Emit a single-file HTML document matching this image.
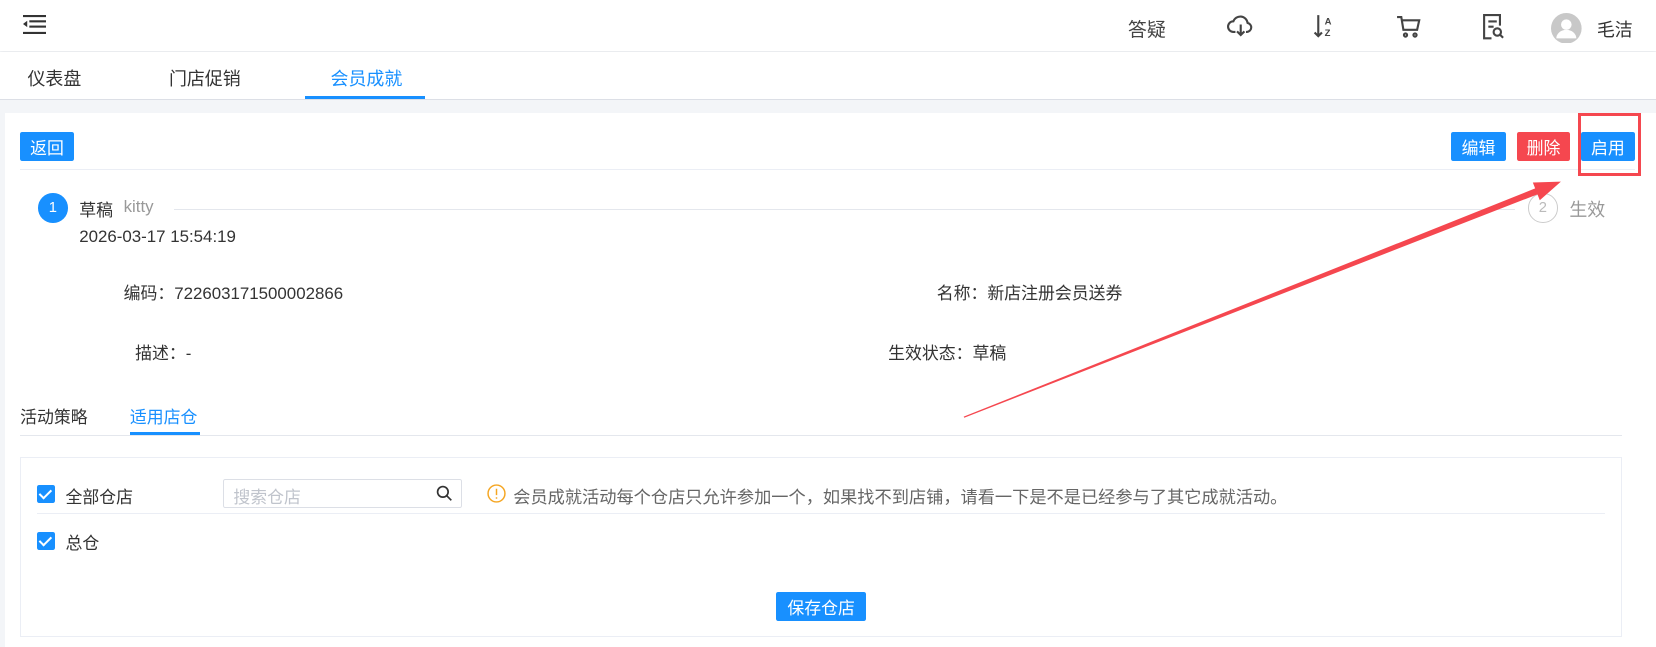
<!DOCTYPE html>
<html><head><meta charset="utf-8"><style>
html{zoom:1.0561}
body{margin:0;width:1568px;height:613px;overflow:hidden;background:#f3f5f8;font-family:"Liberation Sans","Noto Sans CJK SC",sans-serif;font-size:16px;color:#333;position:relative}
.a{position:absolute;white-space:nowrap}
.top{left:0;top:0;width:1568px;height:48px;background:#fff;box-shadow:0 1px 3px rgba(0,0,0,.06)}
.tabs{left:0;top:49px;width:1568px;height:45px;background:#fff;border-bottom:1px solid #dcdfe6}
.card{left:5px;top:107px;width:1563px;height:506px;background:#fff}
.btn{position:absolute;height:27px;display:flex;align-items:center;justify-content:center;color:#fff;font-size:16px;border-radius:2px;background:#1890ff}
.cb{position:absolute;width:17px;height:17px;background:#1890ff;border-radius:2px}
.cb:after{content:"";position:absolute;left:5px;top:2px;width:5px;height:9px;border:solid #fff;border-width:0 2px 2px 0;transform:rotate(45deg)}
</style></head><body>
<div class="a top"></div>
<svg class="a" style="left:22px;top:14px" width="22" height="18" viewBox="0 0 22 18"><g fill="#333"><rect x="0" y="0" width="22" height="2"/><rect x="6" y="5" width="16" height="2"/><rect x="6" y="10" width="16" height="2"/><rect x="0" y="16" width="22" height="2"/><path d="M0 8.5 L4 5.5 L4 11.5Z"/></g></svg>
<div class="a" style="left:1068px;top:14px;font-size:18px;color:#444">答疑</div>
<svg class="a" style="left:1162px;top:14px" width="26" height="22" viewBox="0 0 26 22" fill="none" stroke="#444" stroke-width="2"><path d="M8 16H6a5 5 0 0 1 0-10 7 7 0 0 1 13.5 1.5A4.3 4.3 0 0 1 19 16h-1"/><path d="M13 9v10M9.5 15.5L13 19l3.5-3.5"/></svg>
<svg class="a" style="left:1243px;top:13px" width="22" height="24" viewBox="0 0 22 24"><path d="M5 1v20M1.5 17.5L5 21l3.5-3.5" stroke="#444" stroke-width="2" fill="none"/><text x="11" y="10" font-size="9" font-family="Liberation Sans" fill="#444" font-weight="bold">A</text><text x="11" y="21" font-size="9" font-family="Liberation Sans" fill="#444" font-weight="bold">Z</text></svg>
<svg class="a" style="left:1322px;top:14px" width="24" height="22" viewBox="0 0 24 22" fill="none" stroke="#444" stroke-width="2"><path d="M1 2h4l2 12h13l2-9H6"/><circle cx="9" cy="19" r="1.5"/><circle cx="18" cy="19" r="1.5"/></svg>
<svg class="a" style="left:1403px;top:12px" width="22" height="26" viewBox="0 0 22 26" fill="none" stroke="#444" stroke-width="2"><path d="M9 24H2V2h15v10"/><path d="M6 8h8M6 13h5"/><circle cx="14.5" cy="18" r="3.5"/><path d="M17 20.5l3 3"/></svg>
<svg class="a" style="left:1469px;top:12px" width="29" height="29" viewBox="0 0 29 29"><circle cx="14.5" cy="14.5" r="14.5" fill="#c8c8c8"/><circle cx="14.5" cy="11" r="5" fill="#fff"/><path d="M5 24a9.5 8 0 0 1 19 0" fill="#fff"/></svg>
<div class="a" style="left:1512px;top:15px;font-size:17px;color:#333">毛洁</div>
<div class="a tabs"></div>
<div class="a" style="left:26px;top:62px;font-size:17px">仪表盘</div>
<div class="a" style="left:160px;top:62px;font-size:17px">门店促销</div>
<div class="a" style="left:313px;top:62px;font-size:17px;color:#1890ff">会员成就</div>
<div class="a" style="left:289px;top:91px;width:113px;height:3px;background:#1890ff"></div>
<div class="a card"></div>
<div class="btn" style="left:19px;top:125px;width:51px">返回</div>
<div class="btn" style="left:1374px;top:125px;width:52px">编辑</div>
<div class="btn" style="left:1436px;top:125px;width:51px;background:#f5474f">删除</div>
<div class="btn" style="left:1497px;top:125px;width:51px">启用</div>
<div class="a" style="left:19px;top:160px;width:1529px;height:1px;background:#ebeef5"></div>
<div class="a" style="left:36px;top:183px;width:28px;height:28px;border-radius:50%;background:#1890ff;color:#fff;display:flex;align-items:center;justify-content:center;font-size:14px">1</div>
<div class="a" style="left:75px;top:186px;font-size:16px">草稿</div>
<div class="a" style="left:117px;top:187px;font-size:16px;color:#999">kitty</div>
<div class="a" style="left:165px;top:198px;width:1270px;height:1px;background:#e4e7ed"></div>
<div class="a" style="left:75px;top:215px;font-size:16px">2026-03-17 15:54:19</div>
<div class="a" style="left:1447px;top:183px;width:26px;height:26px;border-radius:50%;border:1px solid #ccc;color:#bbb;display:flex;align-items:center;justify-content:center;font-size:14px">2</div>
<div class="a" style="left:1486px;top:186px;font-size:17px;color:#999">生效</div>
<div class="a" style="left:117px;top:264px">编码：722603171500002866</div>
<div class="a" style="left:887px;top:264px">名称：新店注册会员送券</div>
<div class="a" style="left:128px;top:321px">描述：-</div>
<div class="a" style="left:841px;top:321px">生效状态：草稿</div>
<div class="a" style="left:19px;top:382px">活动策略</div>
<div class="a" style="left:123px;top:382px;color:#1890ff">适用店仓</div>
<div class="a" style="left:123px;top:409px;width:66px;height:3px;background:#1890ff"></div>
<div class="a" style="left:19px;top:412px;width:1517px;height:1px;background:#e4e7ed"></div>
<div class="a" style="left:19px;top:433px;width:1515px;height:168px;border:1px solid #ebeef5"></div>
<div class="cb" style="left:35px;top:459px"></div>
<div class="a" style="left:62px;top:457px">全部仓店</div>
<div class="a" style="left:211px;top:454px;width:225px;height:25px;border:1px solid #dcdfe6;border-radius:2px"></div>
<div class="a" style="left:221px;top:457px;color:#c0c4cc">搜索仓店</div>
<svg class="a" style="left:413px;top:459px" width="16" height="16" viewBox="0 0 16 16" fill="none" stroke="#333" stroke-width="1.6"><circle cx="6.5" cy="6.5" r="5"/><path d="M10 10l4.5 4.5"/></svg>
<svg class="a" style="left:461px;top:458px" width="18" height="18" viewBox="0 0 18 18" fill="none" stroke="#f5a623" stroke-width="1.4"><circle cx="9" cy="9" r="8"/><path d="M9 4.5v6M9 12.5v1.5"/></svg>
<div class="a" style="left:486px;top:457px;color:#666;font-size:16.3px">会员成就活动每个仓店只允许参加一个，如果找不到店铺，请看一下是不是已经参与了其它成就活动。</div>
<div class="a" style="left:35px;top:486px;width:1485px;height:1px;background:#ebeef5"></div>
<div class="cb" style="left:35px;top:504px"></div>
<div class="a" style="left:62px;top:501px">总仓</div>
<div class="btn" style="left:735px;top:561px;width:85px">保存仓店</div>
<div class="a" style="left:1494px;top:107px;width:54px;height:54px;border:3px solid #f5474f"></div>
<svg class="a" style="left:0;top:0" width="1568" height="613"><path d="M913 395.5 L1455.8 184 L1458 189.6 L1478 172 L1451.4 172.8 L1453.6 178.4 L912.5 394.5Z" fill="#f5474f"/></svg>
</body></html>
